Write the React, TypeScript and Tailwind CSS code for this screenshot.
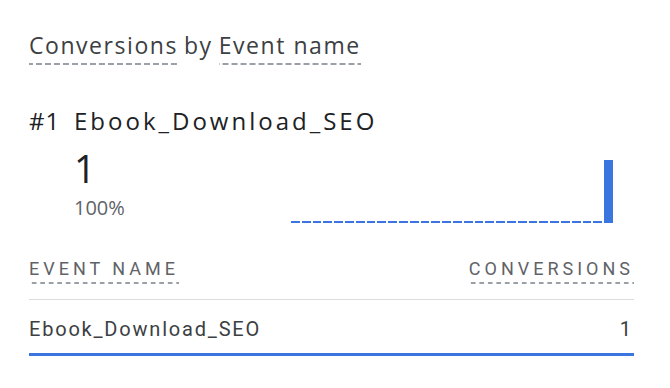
import React from "react";

const dash6 =
  "bg-[linear-gradient(to_right,#9aa0a6_0,#9aa0a6_6px,transparent_6px,transparent_9px)] bg-[length:9px_2px] bg-repeat-x bg-bottom";
const dash5 =
  "bg-[linear-gradient(to_right,#9aa0a6_0,#9aa0a6_5px,transparent_5px,transparent_8.5px)] bg-[length:8.5px_2px] bg-repeat-x bg-bottom";

export default function App() {
  const bars = Array.from({ length: 30 }, (_, i) => i);
  return (
    <div className="w-[670px] h-[388px] bg-white overflow-hidden pl-[29px] pr-[36px] pt-[31px]">
      {/* Title */}
      <div className="flex items-start gap-[6px] text-[23px] leading-[28px] tracking-[1.55px] text-[#3c4043] font-['Open_Sans',sans-serif]">
        <span className={`pb-[6px] ${dash6}`}>Conversions</span>
        <span>by</span>
        <span className={`pb-[6px] ${dash6}`}>Event name</span>
      </div>

      {/* Top item */}
      <div className="mt-[41px] grid grid-cols-[45px_1fr] text-[#202124] font-['Open_Sans',sans-serif]">
        <div className="text-[24px] leading-[30px] tracking-[1px]">#1</div>
        <div className="text-[24px] leading-[30px] tracking-[3px]">Ebook_Download_SEO</div>
        <div />
        <div className="flex items-start justify-between pr-[21px]">
          <div className="flex flex-col">
            <div className="text-[38px] leading-[44px] mt-[10px]">1</div>
            <div className="text-[20px] leading-[26px] text-[#5f6368] mt-[5px]">100%</div>
          </div>
          <div className="w-[322px] h-[63px] mt-[24px] grid grid-cols-[repeat(30,1fr)] gap-x-[2px] items-end">
            {bars.map((i) => (
              <div
                key={i}
                className={i === 29 ? "h-[63px] bg-[#3b76e0]" : "h-[2px] bg-[#3b76e0]"}
              />
            ))}
          </div>
        </div>
      </div>

      {/* Table */}
      <div className="mt-[35px] font-['Roboto',sans-serif]">
        <div className="flex justify-between items-start pb-[15px] border-b border-[#dadce0]">
          <span className={`text-[18px] leading-[22px] tracking-[4px] uppercase text-[#5f6368] pb-[4px] ${dash5}`}>
            Event name
          </span>
          <span className={`text-[18px] leading-[22px] tracking-[4px] uppercase text-[#5f6368] pb-[4px] ${dash5}`}>
            Conversions
          </span>
        </div>
        <div className="flex justify-between items-start h-[56px] pt-[18px] text-[20px] leading-[22px] text-[#3c4043] border-b-[3px] border-[#3b76e0]">
          <span className="tracking-[1.8px]">Ebook_Download_SEO</span>
          <span className="pr-[3px]">1</span>
        </div>
      </div>
    </div>
  );
}
